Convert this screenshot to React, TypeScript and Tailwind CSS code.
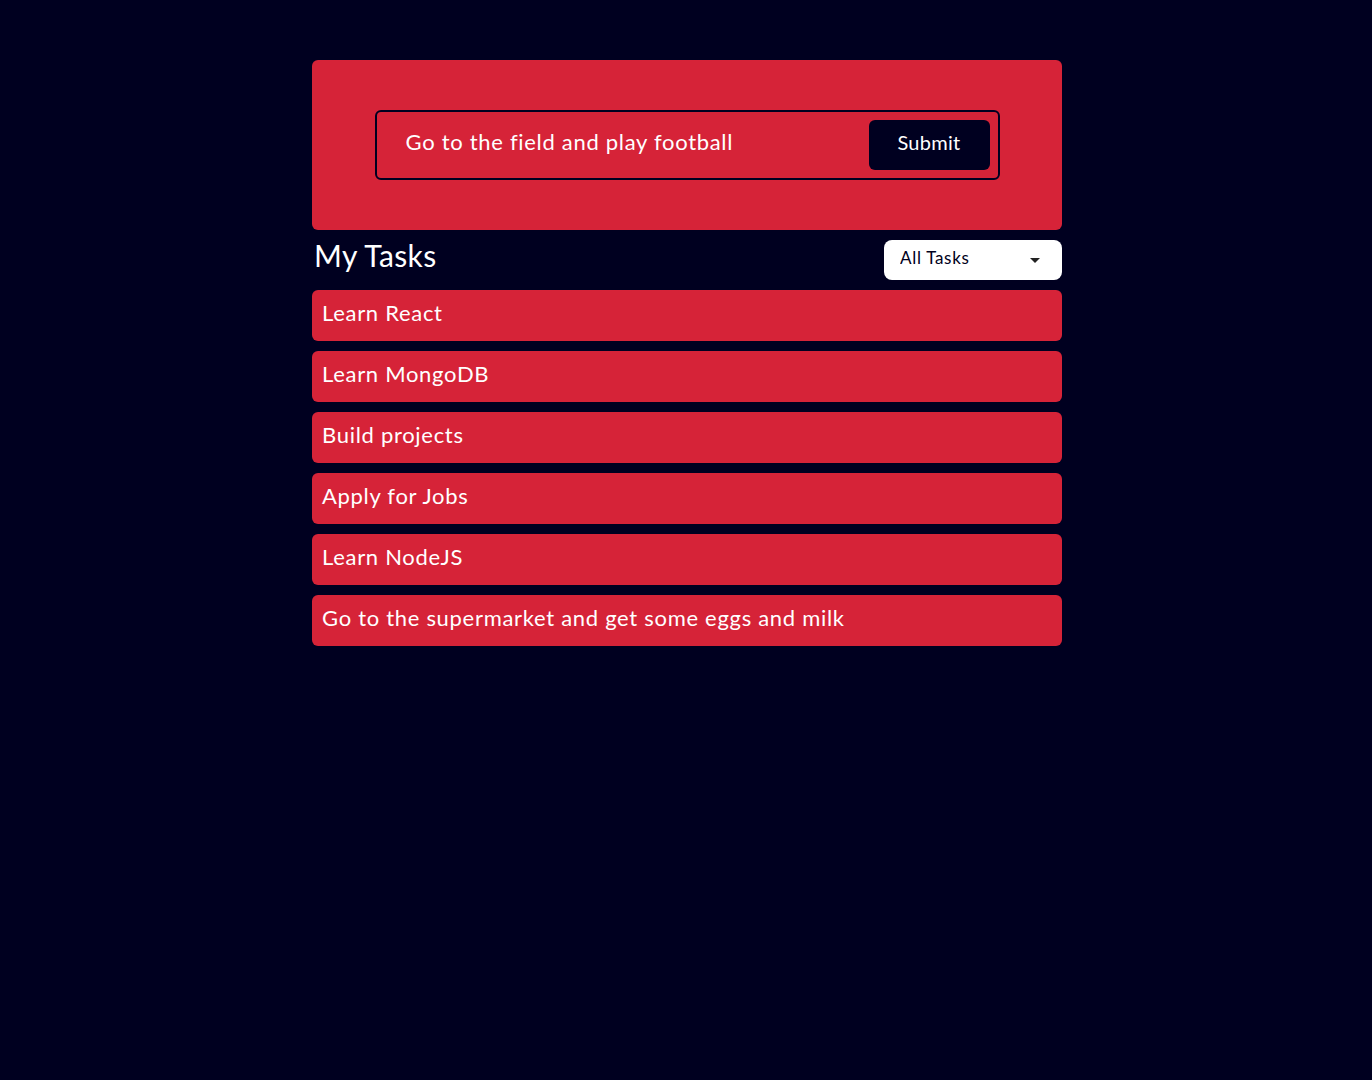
import { useState } from "react";

const TASKS = [
  "Learn React",
  "Learn MongoDB",
  "Build projects",
  "Apply for Jobs",
  "Learn NodeJS",
  "Go to the supermarket and get some eggs and milk",
];

export default function App() {
  const [task, setTask] = useState("Go to the field and play football");
  const [filter, setFilter] = useState("all");

  return (
    <div className="flex min-h-screen justify-center bg-[#000020] pl-[2px] font-['Lato',sans-serif] text-white">
      <div className="w-[750px] pt-[60px]">
        {/* Form card */}
        <div className="flex h-[170px] items-center justify-center rounded-md bg-[#d62338]">
          <form
            className="flex h-[70px] w-[625px] items-center rounded-md border-2 border-[#000020] pl-[29px] pr-2"
            onSubmit={(e) => e.preventDefault()}
          >
            <input
              className="mb-[8px] flex-1 bg-transparent text-[22px] leading-none tracking-[0.7px] text-white outline-none"
              onChange={(e) => setTask(e.target.value)}
              type="text"
              value={task}
            />
            <button
              className="h-[50px] w-[121px] rounded-md bg-[#000020] pb-[6px] text-[20px] leading-none tracking-[0.3px] text-white"
              type="submit"
            >
              Submit
            </button>
          </form>
        </div>

        {/* Header */}
        <div className="mt-[10px] flex h-[40px] justify-between">
          <h1 className="self-start pl-[2px] text-[30px] leading-none tracking-[0.4px]">My Tasks</h1>
          <div className="relative h-[40px] w-[178px]">
            <select
              className="h-full w-full appearance-none rounded-lg bg-white pb-[5px] pl-[16px] text-[17px] tracking-[0.7px] text-[#000020] outline-none"
              onChange={(e) => setFilter(e.target.value)}
              value={filter}
            >
              <option value="all">All Tasks</option>
              <option value="done">Completed</option>
              <option value="todo">Pending</option>
            </select>
            <svg className="pointer-events-none absolute right-[22px] top-[18px]" height="5" viewBox="0 0 10 5" width="10">
              <path d="M0 0h10L5 5z" fill="#222" />
            </svg>
          </div>
        </div>

        {/* Tasks */}
        <ul className="mt-[10px] flex flex-col gap-[10px]">
          {TASKS.map((t) => (
            <li
              className="h-[51px] rounded-md bg-[#d62338] px-[10px] pt-[11.5px] text-[22px] leading-none tracking-[0.7px]"
              key={t}
            >
              {t}
            </li>
          ))}
        </ul>
      </div>
    </div>
  );
}
